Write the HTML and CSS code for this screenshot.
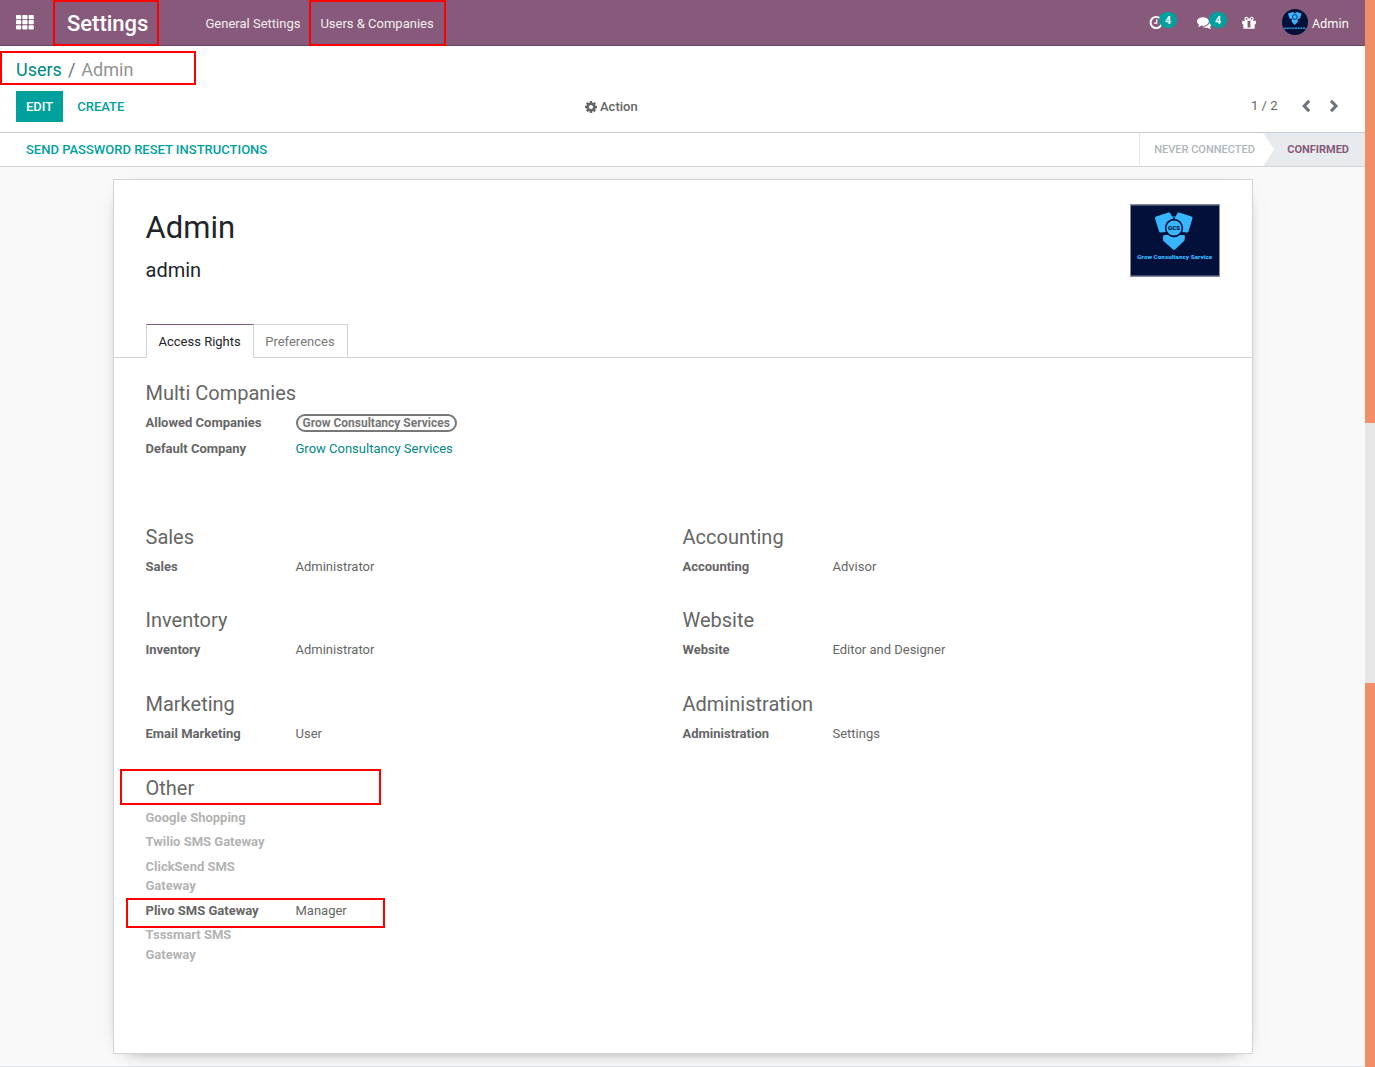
FILE: index.html
```
<!DOCTYPE html>
<html lang="en">
<head>
<meta charset="utf-8">
<title>Settings - Admin</title>
<link rel="stylesheet" href="styles.css">
</head>
<body>
<div class="page">
  <div class="app">
    <header class="navbar">
      <svg class="apps" viewBox="0 0 18 15" fill="#fff"><rect width="5.200" height="4.200" rx=".8"/><rect x="6.300" width="5.200" height="4.200" rx=".8"/><rect x="12.600" width="5.200" height="4.200" rx=".8"/><rect y="5.100" width="5.200" height="4.200" rx=".8"/><rect x="6.300" y="5.100" width="5.200" height="4.200" rx=".8"/><rect x="12.600" y="5.100" width="5.200" height="4.200" rx=".8"/><rect y="10.200" width="5.200" height="4.200" rx=".8"/><rect x="6.300" y="10.200" width="5.200" height="4.200" rx=".8"/><rect x="12.600" y="10.200" width="5.200" height="4.200" rx=".8"/></svg>
      <span class="brand">Settings</span>
      <nav class="menu"><span>General Settings</span><span>Users &amp; Companies</span></nav>
      <div class="systray">
        <div class="tray clock">
          <svg width="15" height="15" viewBox="0 0 15 15" fill="none" stroke="#fff"><circle cx="7.200" cy="7.500" r="5.600" stroke-width="1.900"/><path d="M7.700 4.200V8.100H5" stroke-width="1.200"/></svg>
          <span class="badge">4</span>
        </div>
        <div class="tray chat">
          <svg width="15" height="15" viewBox="0 0 1792 1792" fill="#fff"><path d="M1408 768q0 139-94 257t-256.500 186.500-353.500 68.500q-86 0-176-16-124 88-278 128-36 9-86 16h-3q-11 0-20.500-8t-11.500-21q-1-3-1-6.500t.5-6.500 2-6l2.500-5 3.500-5.500 4-5 4.500-5 4-4.500q5-6 23-25t26-29.500 22.500-29 25-38.500 20.500-44q-124-72-195-177t-71-224q0-139 94-257t256.500-186.500 353.500-68.500 353.500 68.500 256.500 186.500 94 257zm384 256q0 120-71 224.500t-195 176.500q10 24 20.500 44t25 38.500 22.500 29 26 29.500 23 25q1 1 4 4.500t4.500 5 4 5 3.500 5.500l2.500 5 2 6 .5 6.500-1 6.500q-3 14-13 22t-22 7q-50-7-86-16-154-40-278-128-90 16-176 16-271 0-472-132 58 4 88 4 161 0 309-45t264-129q125-92 192-212t67-254q0-77-23-152 129 71 204 178t75 230z"/></svg>
          <span class="badge">4</span>
        </div>
        <svg class="gift" viewBox="0 0 1792 1792" fill="#fff"><path d="M1056 1356v-716h-320v716q0 25 18 38.500t46 13.500h192q28 0 46-13.500t18-38.500zm-456-844h195l-126-161q-26-31-69-31-40 0-68 28t-28 68 28 68 68 28zm688-96q0-40-28-68t-68-28q-43 0-69 31l-125 161h194q40 0 68-28t28-68zm376 256v320q0 14-9 23t-23 9h-96v416q0 40-28 68t-68 28h-1088q-40 0-68-28t-28-68v-416h-96q-14 0-23-9t-9-23v-320q0-14 9-23t23-9h440q-93 0-158.500-65.500t-65.500-158.500 65.500-158.500 158.500-65.500q107 0 168 77l128 165 128-165q61-77 168-77 93 0 158.500 65.500t65.500 158.500-65.500 158.500-158.500 65.500h440q14 0 23 9t9 23z"/></svg>
        <svg class="avatar" viewBox="0 0 26 26">
          <rect width="26" height="26" fill="#03103a"/>
          <g fill="#38b6ff"><path d="M6 4.500 11 3 13 4.500 15 3 19.500 4.500 18 9.500 15.500 10 16 12.500 12.800 16 9.500 12.500 10 10 7.500 9.500Z"/></g>
          <circle cx="12.800" cy="8" r="2.400" fill="none" stroke="#03103a" stroke-width=".8"/>
          <path d="M2 19.200H24" stroke="#2b8fd0" stroke-width="1.400" stroke-dasharray="2.200 .5"/>
        </svg>
        <span class="user">Admin</span>
      </div>
    </header>

    <section class="control">
      <div class="crumbs"><a>Users</a><i>/</i><span>Admin</span></div>
      <div class="actions">
        <div class="left"><span class="btn primary">EDIT</span><span class="btn">CREATE</span></div>
        <div class="action">
          <svg width="14" height="14" viewBox="0 0 1792 1792" fill="#666"><path d="M1152 896q0-106-75-181t-181-75-181 75-75 181 75 181 181 75 181-75 75-181zm512-109v222q0 12-8 23t-20 13l-185 28q-19 54-39 91 35 50 107 138 10 12 10 25t-9 23q-27 37-99 108t-94 71q-12 0-26-9l-138-108q-44 23-91 38-16 136-29 186-7 28-36 28h-222q-14 0-24.500-8.500t-11.500-21.500l-28-184q-49-16-90-37l-141 107q-10 9-25 9-14 0-25-11-126-114-165-168-7-10-7-23 0-12 8-23 15-21 51-66.500t54-70.500q-27-50-41-99l-183-27q-13-2-21-12.500t-8-23.500v-222q0-12 8-23t19-13l186-28q14-46 39-92-40-57-107-138-10-12-10-24 0-10 9-23 26-36 98.500-107.500t94.500-71.500q13 0 26 10l138 107q44-23 91-38 16-136 29-186 7-28 36-28h222q14 0 24.500 8.500t11.500 21.500l28 184q49 16 90 37l142-107q9-9 24-9 13 0 25 10 129 119 165 170 7 8 7 22 0 12-8 23-15 21-51 66.500t-54 70.500q26 50 41 98l183 28q13 2 21 12.500t8 23.500z"/></svg>
          <span>Action</span>
        </div>
        <div class="pager"><span>1 / 2</span>
          <svg width="10" height="14" viewBox="0 0 10 14" fill="none" stroke="#6c757d" stroke-width="3"><path d="M8.200 1.900 3.200 7l5 5.100"/></svg>
          <svg width="10" height="14" viewBox="0 0 10 14" fill="none" stroke="#6c757d" stroke-width="3"><path d="M2 1.900 7 7l-5 5.100"/></svg>
        </div>
      </div>
    </section>

    <section class="statusbar">
      <span class="reset">SEND PASSWORD RESET INSTRUCTIONS</span>
      <div class="states"><span class="never">NEVER CONNECTED</span><span class="confirmed">CONFIRMED</span></div>
    </section>

    <main class="content">
      <article class="sheet">
        <div class="head">
          <div><h1>Admin</h1><p class="login">admin</p></div>
          <svg class="photo" viewBox="0 0 90 72">
            <rect width="90" height="72" fill="#03103a"/>
            <g fill="#38b6ff" stroke="#38b6ff" stroke-width="3" stroke-linejoin="round">
              <path d="M26.500 13.500 39 9.500 42 15 36 26 30.500 26.500Z"/>
              <path d="M61 13.500 48.500 9.500 46 15 52 26 57 26.500Z"/>
              <path d="M34.500 32 53.500 32 53 35.500 44 44 34.500 35.500Z"/>
            </g>
            <path d="M41 12.500h6" stroke="#38b6ff"/>
            <circle cx="44" cy="23.500" r="9.200" fill="#03103a"/>
            <circle cx="44" cy="23.500" r="7.600" fill="#38b6ff"/>
            <text x="44" y="25.500" text-anchor="middle" class="logo-mark" textLength="12" lengthAdjust="spacingAndGlyphs">GCS</text>
            <text x="44.800" y="54.300" text-anchor="middle" class="logo-name" textLength="75" lengthAdjust="spacingAndGlyphs">Grow Consultancy Service</text>
            <rect x=".5" y=".5" width="89" height="71" fill="none" stroke="#868b97"/>
          </svg>
        </div>
        <div class="tabs"><span class="tab active">Access Rights</span><span class="tab">Preferences</span></div>
        <div class="groups">
          <section class="group multi">
            <h2>Multi Companies</h2>
            <dl><dt>Allowed Companies</dt><dd><span class="tag">Grow Consultancy Services</span></dd></dl>
            <dl><dt>Default Company</dt><dd class="link">Grow Consultancy Services</dd></dl>
          </section>
          <section class="group r1"><h2>Sales</h2><dl><dt>Sales</dt><dd>Administrator</dd></dl></section>
          <section class="group r1"><h2>Accounting</h2><dl><dt>Accounting</dt><dd>Advisor</dd></dl></section>
          <section class="group r2"><h2>Inventory</h2><dl><dt>Inventory</dt><dd>Administrator</dd></dl></section>
          <section class="group r2"><h2>Website</h2><dl><dt>Website</dt><dd>Editor and Designer</dd></dl></section>
          <section class="group r2"><h2>Marketing</h2><dl><dt>Email Marketing</dt><dd>User</dd></dl></section>
          <section class="group r2"><h2>Administration</h2><dl><dt>Administration</dt><dd>Settings</dd></dl></section>
          <section class="group other">
            <h2>Other</h2>
            <dl class="empty"><dt>Google Shopping</dt></dl>
            <dl class="empty"><dt>Twilio SMS Gateway</dt></dl>
            <dl class="empty"><dt>ClickSend SMS Gateway</dt></dl>
            <dl><dt>Plivo SMS Gateway</dt><dd>Manager</dd></dl>
            <dl class="empty"><dt>Tsssmart SMS Gateway</dt></dl>
          </section>
        </div>
      </article>
    </main>
  </div>
  <div class="scrollbar"><div class="thumb"></div></div>
  <div class="mark mark-settings"></div>
  <div class="mark mark-users"></div>
  <div class="mark mark-crumbs"></div>
  <div class="mark mark-other"></div>
  <div class="mark mark-plivo"></div>
</div>
</body>
</html>
```
FILE: styles.css
```
* { box-sizing: border-box; }
body { margin: 0; font: 13px/19.5px Roboto, sans-serif; color: #666; background: #f9f9f9; overflow: hidden; }
h1, h2, p, dl, dd { margin: 0; font-weight: 400; }
svg { display: block; flex: none; }
.page { position: relative; display: flex; height: 1067px; }
.app { flex: 1; display: flex; flex-direction: column; }

/* top navigation */
.navbar { height: 46px; flex: none; display: flex; align-items: center; padding-left: 16px; background: #875a7b; border-bottom: 1px solid #68465f; color: #fff; }
.apps { width: 18px; height: 15px; }
.brand { margin-left: 33px; width: 138.500px; padding-top: 2px; font-size: 22px; line-height: 30px; font-weight: 500; }
.menu { display: flex; gap: 20px; color: #f3eef2; padding-top: 2px; }
.systray { margin-left: auto; height: 45px; display: flex; align-items: center; padding-right: 16px; }
.tray { display: flex; align-items: center; }
.badge { width: 18px; height: 16px; margin-top: -6px; border-radius: 8px; background: #00a09d; font: 700 10px/16px "Noto Sans", sans-serif; text-align: center; }
.clock .badge { margin-left: -5px; }
.chat { margin-left: 20px; }
.chat .badge { margin-left: -3px; }
.gift { width: 16px; height: 16px; margin-left: 14px; }
.avatar { width: 26px; height: 26px; margin: -2px 0 0 25px; border-radius: 50%; }
.user { margin-left: 4px; padding-top: 2px; font-family: "Noto Sans", sans-serif; font-size: 12px; }
.logo-mark { font: 900 5px Roboto, sans-serif; fill: #03103a; }
.logo-name { font: 900 5.500px Roboto, sans-serif; fill: #38b6ff; }

/* breadcrumbs and buttons */
.control { height: 87px; flex: none; background: #fff; border-bottom: 1px solid #ccc; padding: 10px 16px 0; }
.crumbs { display: flex; height: 28px; font-size: 18px; line-height: 28px; color: #929292; }
.crumbs a { color: #008784; }
.crumbs i { font-style: normal; padding: 0 6px; color: #6c757d; }
.actions { display: grid; grid-template-columns: 568px 1fr auto; align-items: center; height: 31px; margin-top: 7px; }
.left { display: flex; gap: 4px; }
.btn { height: 31px; line-height: 31px; padding: 0 10px; color: #00a09d; font-weight: 500; }
.btn.primary { background: #00a09d; color: #fff; }
.action { display: flex; align-items: center; gap: 2px; font-weight: 500; }
.pager { display: flex; align-items: center; padding-right: 10px; }
.pager span { padding-bottom: 2px; }
.pager svg { margin: -2px 0 0 18px; }
.pager svg:first-of-type { margin-left: 23.500px; }

/* status bar */
.statusbar { height: 34px; flex: none; display: flex; justify-content: space-between; background: #fff; border-bottom: 1px solid #ced4da; line-height: 33px; }
.reset { padding-left: 26px; color: #00a09d; font-weight: 500; }
.states { display: flex; background: #e7ebee; font-size: 11px; font-weight: 500; }
.never { width: 135px; padding-left: 14px; background: #fff; border-left: 1px solid #dee2e6; color: #adb5bd; clip-path: polygon(0 0, 124px 0, 100% 50%, 124px 100%, 0 100%); }
.confirmed { padding: 0 16px 0 13px; color: #875a7b; font-weight: 700; }

/* form sheet */
.content { flex: 1; padding: 12px 112px 0 113px; border-bottom: 1px solid #dee2e6; }
.sheet { height: 875px; background: #fff; border: 1px solid #ced4da; box-shadow: 0 5px 20px -15px #000; }
.head { display: flex; justify-content: space-between; height: 144px; padding: 24px 32px 0 31.500px; color: #212529; }
h1 { padding-top: 1px; font-size: 31px; line-height: 46px; }
.login { margin-top: 4px; font-size: 20px; line-height: 30px; }
.photo { width: 90px; height: 73px; }
.tabs { display: flex; height: 34px; padding-left: 32px; border-bottom: 1px solid #ced4da; }
.tab { height: 33px; padding: 0 12px 0 11.500px; border: 1px solid #ced4da; border-width: 1px 1px 0 0; line-height: 33px; color: #777; }
.tab.active { height: 34px; border-left-width: 1px; border-top-color: #875a7b; background: #fff; color: #212529; }
.groups { display: grid; grid-template-columns: 537px 1fr; padding: 20px 0 0 31.500px; }
.group h2 { font-size: 20px; line-height: 30px; margin-bottom: 4.500px; }
.multi { grid-column: 1 / 3; height: 144px; }
.multi dl { height: 26px; }
.r1 { height: 83px; }
.r2 { height: 84px; }
.group dl { display: grid; grid-template-columns: 150px 1fr; padding-bottom: 5px; }
.group dt { font-weight: 700; padding-right: 24px; }
.group .empty dt { color: #b3b3b3; }
.link { color: #008784; }
.tag { display: inline-block; vertical-align: top; height: 18px; margin-top: 1px; padding: 0 5px; border: 2px solid #777; border-radius: 9px; font-size: 12px; line-height: 14px; font-weight: 700; color: #777; }

/* page scrollbar */
.scrollbar { width: 10px; flex: none; padding-top: 423px; background: #f08f67; }
.thumb { height: 260px; background: #e6e6e6; }

/* highlight frames */
.mark { position: absolute; border: 2px solid #f00; }
.mark-settings { left: 53px; top: 0; width: 106px; height: 46px; }
.mark-users { left: 309px; top: 0; width: 137px; height: 46px; }
.mark-crumbs { left: 0; top: 51px; width: 196px; height: 34px; }
.mark-other { left: 120px; top: 769px; width: 261px; height: 36px; }
.mark-plivo { left: 126px; top: 898px; width: 259px; height: 30px; }
```
